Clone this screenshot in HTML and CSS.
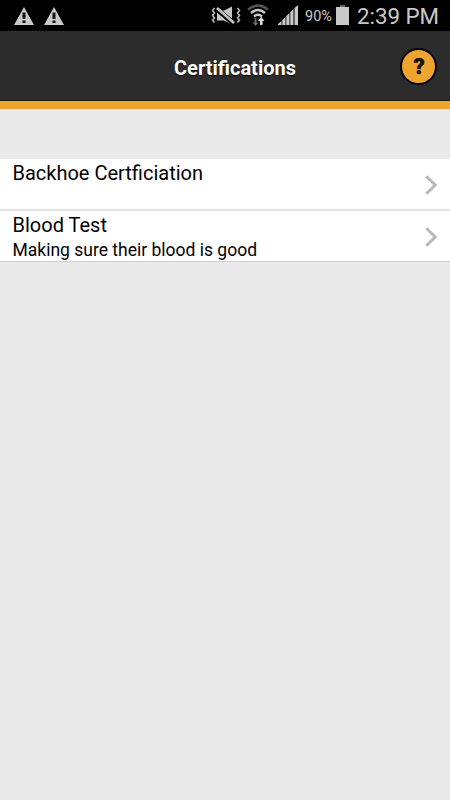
FILE: index.html
```html
<!DOCTYPE html>
<html lang="en">
<head>
<meta charset="utf-8">
<title>Certifications</title>
<link rel="stylesheet" href="styles.css">
</head>
<body>
<div class="status">
  <svg class="warnings" width="52" height="20" viewBox="0 0 52 20">
    <path d="M10 1 20 19H0ZM40 1 50 19H30Z" fill="#c9c9c9"/>
    <path d="M8.500 6.500h3v6.500h-3ZM8.500 14.600h3V17h-3ZM38.500 6.500h3v6.500h-3ZM38.500 14.600h3V17h-3Z" fill="#111"/>
  </svg>
  <svg class="mute" width="30" height="20" viewBox="0 0 30 20">
    <path d="M6 4.500h7l8-4v18l-8-4H6Z" fill="#c4c4c4"/>
    <path d="M4 1.500 24 18.500" stroke="#000" stroke-width="5"/>
    <path d="M6 2 23 17" stroke="#c4c4c4" stroke-width="2.600"/>
    <path d="M3.500 2 1.500 4.500l2 2.500-2 2.500 2 2.500-2 2 2 2.500M26.500 2l2 2.500-2 2.500 2 2.500-2 2.500 2 2-2 2.500" fill="none" stroke="#bbb" stroke-width="1.500"/>
  </svg>
  <svg class="wifi" width="22" height="24" viewBox="0 0 22 24">
    <g fill="none" stroke-width="2.400">
      <path d="M1 5.500Q11-2.500 21 5.500" stroke="#555"/>
      <path d="M4 9Q11 3 18 9M7 12.500Q11 9 15 12.500" stroke="#c9c9c9"/>
    </g>
    <path d="M7.500 14h2v4.500h2L8.500 22 5.500 18.500h2Z" fill="#666"/>
    <path d="M13 21h2.500v-4h2L14.200 12.800 11 17h2Z" fill="#ddd"/>
  </svg>
  <svg class="signal" width="21" height="20" viewBox="0 0 21 20">
    <path d="M0 20v-1l3.500-3v4ZM4.300 20v-5l3.200-3v8ZM8.300 20V11l3.200-3v12ZM12.300 20V7l3.200-3v16ZM16.500 20V3L20 0v20Z" fill="#c9c9c9"/>
  </svg>
  <span class="percent">90%</span>
  <svg class="battery" width="13" height="20" viewBox="0 0 13 20">
    <path d="M4 0h5v2H4Z" fill="#666"/><path d="M0 2h13v18H0Z" fill="#c9c9c9"/>
  </svg>
  <span class="clock">2:39 PM</span>
</div>
<header class="header">
  <h1 class="title">Certifications</h1>
  <button class="help">?</button>
</header>
<ul class="list">
  <li class="row">
    <div class="text"><div class="name">Backhoe Certficiation</div></div>
    <svg class="chevron" width="13" height="20" viewBox="0 0 13 20"><path d="m1.300 1.300 8.900 8.700-8.900 8.700" fill="none" stroke="#b9b9b9" stroke-width="3"/></svg>
  </li>
  <li class="row">
    <div class="text"><div class="name">Blood Test</div><div class="detail">Making sure their blood is good</div></div>
    <svg class="chevron" width="13" height="20" viewBox="0 0 13 20"><path d="m1.300 1.300 8.900 8.700-8.900 8.700" fill="none" stroke="#b9b9b9" stroke-width="3"/></svg>
  </li>
</ul>
</body>
</html>
```

FILE: styles.css
```css
* { box-sizing: border-box; }
body { margin: 0; min-height: 800px; background: #e9e9e9; color: #000; font-family: Roboto, "Liberation Sans", sans-serif; }
.status { display: flex; align-items: flex-start; height: 31px; padding-left: 14px; background: #000; color: #c9c9c9; }
.status svg { flex: none; }
.warnings { margin-top: 6px; }
.mute { margin: 6px 0 0 145px; }
.wifi { margin: 4px 0 0 6px; }
.signal { margin: 5px 0 0 9px; }
.percent { width: 31px; margin-left: 6px; font-size: 14.500px; line-height: 34px; white-space: nowrap; }
.battery { margin-top: 5px; }
.clock { margin-left: 8px; font-size: 22.300px; line-height: 33px; white-space: nowrap; }
.header { display: grid; grid-template-columns: 70px 1fr 50px; align-items: center; height: 78px; background: #2c2c2c; border-bottom: 8px solid #eea530; box-shadow: inset 0 -1px #17120f; }
.title { grid-column: 2; margin: 4px 0 0; text-align: center; font-size: 20px; line-height: 24px; font-weight: 700; }
.title { color: #fff; text-shadow: 0 1px 1px #000; }
.help { width: 37px; height: 37px; padding: 0 0 0 1px; border: 2px solid #000; border-radius: 50%; background: #eea530; color: #15110b; font: 900 22px/33px Roboto, sans-serif; -webkit-text-stroke: 0.500px #15110b; }
.list { list-style: none; margin: 50px 0 0; padding: 0; }
.row { display: flex; justify-content: space-between; align-items: center; height: 52px; padding: 0 12px 0 12.500px; background: #fff; border-bottom: 2px solid #e3e3e3; }
.row:last-child { height: 51px; border-bottom: 1px solid #d0d0d0; }
.text { align-self: flex-start; }
.name { font-size: 20px; line-height: 28px; }
.detail { font-size: 17.500px; line-height: 23px; }
.chevron { margin-top: 2px; }
```
